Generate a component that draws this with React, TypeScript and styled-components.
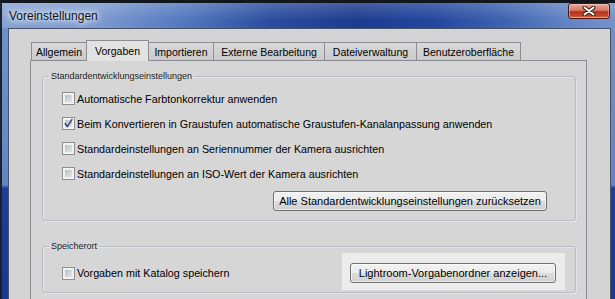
import React from "react";
import styled, { createGlobalStyle, css } from "styled-components";

const Global = createGlobalStyle`
  html, body { margin: 0; padding: 0; overflow: hidden; background: #1a3893; }
  body { font-family: "Liberation Sans", Arial, sans-serif; font-size: 11px; color: #000; }
`;

const Window = styled.div`
  width: 615px;
  height: 299px;
  box-sizing: border-box;
  border-top: 3px solid #12161d;
  border-left: 2px solid #1a2130;
  background: linear-gradient(to bottom, #7392c9 0px, #6485c2 182px, #1d3e9c 185px, #1a3893 100%);
  display: flex;
  flex-direction: column;
  overflow: hidden;
`;

const TitleBar = styled.div`
  height: 25px;
  flex: none;
  display: flex;
  justify-content: space-between;
  align-items: flex-start;
  background:
    linear-gradient(to bottom, rgba(255, 255, 255, 0.18), rgba(255, 255, 255, 0) 70%),
    linear-gradient(to right, #86a2d2 0%, #7b99cf 16%, #5277bd 30%, #2b4c9f 44%, #1c3b8f 58%, #23469d 70%, #3d63b0 82%, #6284c4 92%, #7493cb 100%);
`;

const Title = styled.span`
  margin: 5px 0 0 7px;
  font-size: 12px;
  line-height: 16px;
  color: #111;
  text-shadow: 0 0 5px #fff, 0 0 9px rgba(255, 255, 255, 0.9), 0 0 14px rgba(255, 255, 255, 0.7);
`;

const CloseButton = styled.div`
  width: 42px;
  height: 16px;
  margin-right: 5px;
  box-sizing: border-box;
  border: 1px solid #4a1610;
  border-radius: 3px;
  background: linear-gradient(to bottom, #e9a99a 0%, #d47a68 45%, #b8321e 55%, #c5462c 85%, #d9785a 100%);
  box-shadow: inset 0 0 0 1px rgba(255, 220, 210, 0.45);
  display: flex;
  align-items: center;
  justify-content: center;
`;

const Client = styled.div`
  flex: 1;
  min-height: 0;
  margin: 0 4px 0 6px;
  border: 1px solid #46526a;
  border-bottom: none;
  background: #d4d4d4;
  padding: 11px 23px 0 21px;
  display: flex;
  flex-direction: column;
`;

const TabRow = styled.div`
  height: 21px;
  flex: none;
  display: flex;
  align-items: flex-end;
  padding-left: 1px;
  margin-bottom: -1px;
  position: relative;
  z-index: 1;
`;

const Tab = styled.div<{ $active?: boolean; $w: number }>`
  box-sizing: border-box;
  width: ${(p) => p.$w}px;
  height: 18px;
  margin-bottom: 1px;
  border: 1px solid #8a8d94;
  border-bottom: none;
  background: linear-gradient(to bottom, #d8d8d8, #cbcbcb);
  display: flex;
  align-items: center;
  justify-content: center;
  font-size: 10.5px;
  color: #000;
  white-space: nowrap;
  & + & { margin-left: -1px; }
  ${(p) =>
    p.$active &&
    css`
      height: 21px;
      margin-bottom: 0;
      background: #e2e2e2;
      padding-bottom: 1px;
      position: relative;
      z-index: 1;
    `}
`;

const Panel = styled.div`
  flex: 1;
  border: 1px solid #8a8d94;
  border-bottom: none;
  background: #d6d6d6;
  padding: 10px 10px 0 11px;
  display: flex;
  flex-direction: column;
  gap: 20px;
`;

const GroupBox = styled.fieldset<{ $padTop: number; $padRight: number; $padBottom: number }>`
  margin: 0;
  min-width: 0;
  border: 1px solid #b9bcc2;
  border-radius: 3px;
  padding: ${(p) => p.$padTop}px ${(p) => p.$padRight}px ${(p) => p.$padBottom}px 6px;
  box-shadow: 1px 1px 0 #e6e6e6, inset 1px 1px 0 #e6e6e6;
`;

const Legend = styled.legend`
  font-size: 9px;
  line-height: 11px;
  padding: 0 2px;
  color: #1a1a1a;
`;

const GroupBody = styled.div`
  display: flex;
  flex-direction: column;
  padding-left: 13px;
`;

const CheckRow = styled.label`
  height: 25px;
  display: flex;
  align-items: center;
  gap: 2px;
  white-space: nowrap;
  font-size: 10.75px;
`;

const Box = styled.span`
  box-sizing: border-box;
  width: 13px;
  height: 13px;
  flex: none;
  border: 1px solid #8e8f8f;
  background: linear-gradient(135deg, #aeb3b9 0%, #d3d5d8 55%, #eeeeee 100%);
  box-shadow: inset 0 0 0 2px #f2f2f2;
  display: flex;
  align-items: center;
  justify-content: center;
`;

const Button = styled.button<{ $w: number }>`
  box-sizing: border-box;
  width: ${(p) => p.$w}px;
  height: 20px;
  padding: 0;
  border: 1px solid #707070;
  border-radius: 3px;
  background: linear-gradient(to bottom, #f2f2f2 0%, #ebebeb 50%, #dddddd 50%, #cfcfcf 100%);
  box-shadow: inset 0 0 0 1px rgba(255, 255, 255, 0.55);
  font-family: inherit;
  font-size: 11px;
  color: #000;
  white-space: nowrap;
`;

const ResetButton = styled(Button)`
  align-self: flex-end;
  margin-top: 5px;
`;

const SaveRow = styled.div`
  display: flex;
  align-items: center;
  justify-content: space-between;
`;

const CheckSlot = styled.div`
  padding-top: 3px;
`;

const Highlight = styled.div`
  background: #ececec;
  padding: 10px 9px 7px 8px;
  display: flex;
`;

function CheckBox({ label, checked }: { label: string; checked?: boolean }) {
  return (
    <CheckRow>
      <Box>
        {checked && (
          <svg width="11" height="11" viewBox="0 0 11 11">
            <path d="M2.2 5.6 L4.3 8.6 L8.9 1.6" fill="none" stroke="#3d4f86" strokeWidth="1.7" strokeLinecap="round" strokeLinejoin="round" />
          </svg>
        )}
      </Box>
      <span>{label}</span>
    </CheckRow>
  );
}

const tabs: { label: string; w: number; active?: boolean }[] = [
  { label: "Allgemein", w: 56 },
  { label: "Vorgaben", w: 63, active: true },
  { label: "Importieren", w: 66 },
  { label: "Externe Bearbeitung", w: 112 },
  { label: "Dateiverwaltung", w: 93 },
  { label: "Benutzeroberfläche", w: 105 },
];

export default function App() {
  return (
    <>
      <Global />
      <Window>
        <TitleBar>
          <Title>Voreinstellungen</Title>
          <CloseButton>
            <svg width="14" height="10" viewBox="0 0 14 10">
              <path d="M2.5 1.5 L11.5 8.5 M11.5 1.5 L2.5 8.5" stroke="#3a1a14" strokeWidth="4" strokeLinecap="round" />
              <path d="M2.5 1.5 L11.5 8.5 M11.5 1.5 L2.5 8.5" stroke="#ffffff" strokeWidth="2" strokeLinecap="round" />
            </svg>
          </CloseButton>
        </TitleBar>
        <Client>
          <TabRow>
            {tabs.map((t) => (
              <Tab key={t.label} $w={t.w} $active={t.active}>
                {t.label}
              </Tab>
            ))}
          </TabRow>
          <Panel>
            <GroupBox $padTop={4} $padRight={28} $padBottom={9}>
              <Legend>Standardentwicklungseinstellungen</Legend>
              <GroupBody>
                <CheckBox label="Automatische Farbtonkorrektur anwenden" />
                <CheckBox label="Beim Konvertieren in Graustufen automatische Graustufen-Kanalanpassung anwenden" checked />
                <CheckBox label="Standardeinstellungen an Seriennummer der Kamera ausrichten" />
                <CheckBox label="Standardeinstellungen an ISO-Wert der Kamera ausrichten" />
                <ResetButton $w={274}>Alle Standardentwicklungseinstellungen zurücksetzen</ResetButton>
              </GroupBody>
            </GroupBox>
            <GroupBox $padTop={1} $padRight={10} $padBottom={2}>
              <Legend>Speicherort</Legend>
              <GroupBody>
                <SaveRow>
                  <CheckSlot>
                    <CheckBox label="Vorgaben mit Katalog speichern" />
                  </CheckSlot>
                  <Highlight>
                    <Button $w={206}>Lightroom-Vorgabenordner anzeigen...</Button>
                  </Highlight>
                </SaveRow>
              </GroupBody>
            </GroupBox>
          </Panel>
        </Client>
      </Window>
    </>
  );
}
